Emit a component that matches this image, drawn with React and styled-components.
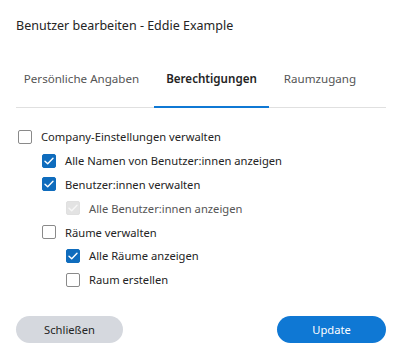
import React, { useState } from "react";
import styled, { createGlobalStyle } from "styled-components";

const Global = createGlobalStyle`
  html, body { margin: 0; padding: 0; background: #ffffff; }
  body { font-family: "Noto Sans", "Open Sans", sans-serif; color: #242424; }
  * { box-sizing: border-box; }
`;

const Dialog = styled.div`
  width: 400px;
  height: 357px;
  padding: 16px 14px 0 16px;
  display: flex;
  flex-direction: column;
  background: #fff;
`;

const Title = styled.h1`
  margin: 0;
  font-size: 12.5px;
  font-weight: 400;
  line-height: 20px;
  color: #242424;
`;

const TabBar = styled.div`
  border-bottom: 1px solid #e0e0e0;
`;

const TabList = styled.div`
  display: flex;
  margin: 22px 0 0 -7px;
`;

const Tab = styled.button`
  width: ${(p) => p.$w}px;
  padding: 11px 0 17px;
  border: none;
  border-bottom: 2px solid ${(p) => (p.$active ? "#0f78d4" : "transparent")};
  margin-bottom: -1px;
  background: none;
  font-family: inherit;
  font-size: 11.6px;
  line-height: 20px;
  font-weight: ${(p) => (p.$active ? 600 : 400)};
  color: ${(p) => (p.$active ? "#242424" : "#555555")};
  text-align: center;
  cursor: pointer;
`;

const List = styled.div`
  display: flex;
  flex-direction: column;
  margin-top: 17px;
`;

const Row = styled.label`
  display: flex;
  align-items: center;
  height: 23.8px;
  padding-left: ${(p) => 2 + p.$level * 24}px;
  gap: 9px;
  font-size: 11.2px;
  color: ${(p) => (p.$disabled ? "#555" : "#242424")};
  cursor: pointer;
`;

const Box = styled.span`
  width: 14px;
  height: 14px;
  border-radius: 2px;
  display: flex;
  align-items: center;
  justify-content: center;
  flex-shrink: 0;
  border: 1px solid
    ${(p) => (p.$disabled ? "#e0e0e0" : p.$checked ? "#0f6cbd" : "#8a8a8a")};
  background: ${(p) => (p.$disabled ? "#e3e3e3" : p.$checked ? "#0f6cbd" : "#fff")};
`;

const Footer = styled.div`
  display: flex;
  justify-content: space-between;
  margin-top: 24px;
`;

const Button = styled.button`
  width: ${(p) => p.$w}px;
  height: 27px;
  border: none;
  border-radius: 14px;
  font-family: inherit;
  font-size: 11.2px;
  background: ${(p) => (p.$primary ? "#0f78d4" : "#d5d8de")};
  color: ${(p) => (p.$primary ? "#ffffff" : "#242424")};
  cursor: pointer;
`;

function Check({ checked, disabled }) {
  return (
    <Box $checked={checked} $disabled={disabled}>
      {checked && (
        <svg width="10" height="8" viewBox="0 0 10 8">
          <path
            d="M1 4.2 L3.7 6.8 L9 1.2"
            fill="none"
            stroke={disabled ? "#f7f7f7" : "#ffffff"}
            strokeWidth="1.4"
            strokeLinecap="round"
            strokeLinejoin="round"
          />
        </svg>
      )}
    </Box>
  );
}

const initial = [
  { label: "Company-Einstellungen verwalten", level: 0, checked: false },
  { label: "Alle Namen von Benutzer:innen anzeigen", level: 1, checked: true },
  { label: "Benutzer:innen verwalten", level: 1, checked: true },
  { label: "Alle Benutzer:innen anzeigen", level: 2, checked: true, disabled: true },
  { label: "Räume verwalten", level: 1, checked: false },
  { label: "Alle Räume anzeigen", level: 2, checked: true },
  { label: "Raum erstellen", level: 2, checked: false },
];

const tabs = [
  { label: "Persönliche Angaben", w: 145 },
  { label: "Berechtigungen", w: 115 },
  { label: "Raumzugang", w: 102 },
];

export default function App() {
  const [items, setItems] = useState(initial);
  const [active, setActive] = useState(1);
  const toggle = (i) =>
    setItems((arr) =>
      arr.map((it, j) => (j === i && !it.disabled ? { ...it, checked: !it.checked } : it))
    );
  return (
    <>
      <Global />
      <Dialog>
        <Title>Benutzer bearbeiten - Eddie Example</Title>
        <TabBar>
          <TabList>
            {tabs.map((t, i) => (
              <Tab key={t.label} $w={t.w} $active={i === active} onClick={() => setActive(i)}>
                {t.label}
              </Tab>
            ))}
          </TabList>
        </TabBar>
        <List>
          {items.map((it, i) => (
            <Row key={it.label} $level={it.level} $disabled={it.disabled} onClick={() => toggle(i)}>
              <Check checked={it.checked} disabled={it.disabled} />
              {it.label}
            </Row>
          ))}
        </List>
        <Footer>
          <Button $w={107}>Schließen</Button>
          <Button $w={109} $primary>Update</Button>
        </Footer>
      </Dialog>
    </>
  );
}
